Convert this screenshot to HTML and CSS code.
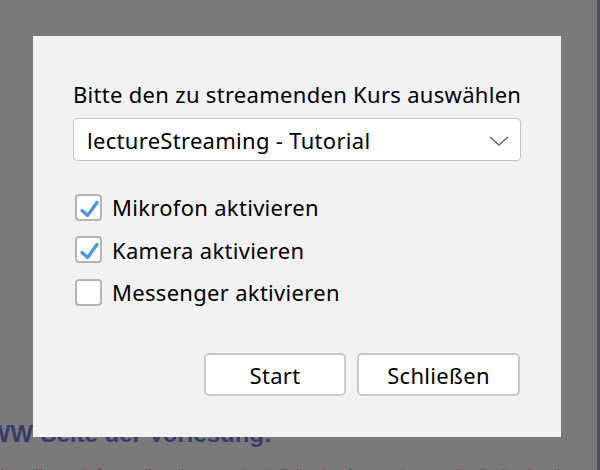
FILE: index.html
```html
<!DOCTYPE html>
<html lang="de">
<head>
<meta charset="utf-8">
<title>Kurs auswählen</title>
<link rel="stylesheet" href="styles.css">
</head>
<body>
<div class="page">
  <h2 class="page-heading">WWW-Seite der Vorlesung:</h2>
  <p class="page-link">http://www.informatik.uni-example.de/lehre/vorlesung/streaming/index.html</p>
</div>
<div class="overlay">
  <div class="dialog">
    <div class="dialog-title">Bitte den zu streamenden Kurs auswählen</div>
    <div class="select">
      <span class="select-value">lectureStreaming - Tutorial</span>
      <svg class="chevron" width="20" height="10" viewBox="0 0 20 10"><path d="M1 1 L10 9 L19 1" fill="none" stroke="#666" stroke-width="1.4"/></svg>
    </div>
    <div class="options">
      <label class="option"><span class="box"><svg width="23" height="23" viewBox="0 0 23 23"><path d="M5 14.5 L10.5 19.5 L20 6.5" fill="none" stroke="#4a94e2" stroke-width="3.2" stroke-linecap="round" stroke-linejoin="round"/></svg></span><span class="option-text">Mikrofon aktivieren</span></label>
      <label class="option"><span class="box"><svg width="23" height="23" viewBox="0 0 23 23"><path d="M5 14.5 L10.5 19.5 L20 6.5" fill="none" stroke="#4a94e2" stroke-width="3.2" stroke-linecap="round" stroke-linejoin="round"/></svg></span><span class="option-text">Kamera aktivieren</span></label>
      <label class="option"><span class="box"></span><span class="option-text">Messenger aktivieren</span></label>
    </div>
    <div class="buttons">
      <button class="btn btn-start">Start</button>
      <button class="btn btn-close">Schließen</button>
    </div>
  </div>
</div>
</body>
</html>
```

FILE: styles.css
```css
html, body {
  margin: 0;
  padding: 0;
  background: #ffffff;
}
.page {
  box-sizing: border-box;
  width: 600px;
  height: 470px;
  overflow: hidden;
  padding-top: 420px;
  border-right: 3px solid #9c9cf0;
  font-family: "Liberation Sans", Arial, sans-serif;
}
.page-heading {
  margin: 0 0 0 -35px;
  font-size: 24px;
  line-height: 28px;
  font-weight: bold;
  color: #7a7ae6;
  white-space: nowrap;
}
.page-link {
  margin: 18px 0 0 0;
  font-size: 17px;
  line-height: 20px;
  color: #e04a86;
  white-space: nowrap;
}
.overlay {
  position: fixed;
  inset: 0;
  background: rgba(0, 0, 0, 0.52);
  padding: 36px 0 0 33px;
  box-sizing: border-box;
}
.dialog {
  box-sizing: border-box;
  width: 528px;
  background: #f2f2f2;
  padding: 42px 40px 41px 40px;
  font-family: "Noto Sans", "Open Sans", sans-serif;
  font-size: 22px;
  letter-spacing: 0.3px;
  color: #000;
}
.dialog-title {
  line-height: 32px;
  white-space: nowrap;
}
.select {
  box-sizing: border-box;
  margin-top: 8px;
  width: 448px;
  height: 43px;
  background: #fff;
  border: 1.5px solid #c4c4c4;
  border-radius: 4px;
  display: flex;
  align-items: center;
  justify-content: space-between;
  padding: 0 11px 0 13px;
}
.select-value {
  white-space: nowrap;
}
.chevron {
  display: block;
  margin-top: 2px;
}
.options {
  margin-top: 33px;
  display: flex;
  flex-direction: column;
  gap: 16.5px;
}
.option {
  display: flex;
  align-items: center;
  height: 26px;
}
.box {
  box-sizing: border-box;
  width: 27px;
  height: 27px;
  margin-left: 2px;
  border: 2px solid #b4b4b4;
  border-radius: 4px;
  background: #fff;
  display: flex;
}
.box svg {
  display: block;
}
.option-text {
  margin-left: 10px;
  white-space: nowrap;
}
.buttons {
  margin-top: 48px;
  display: flex;
  justify-content: flex-end;
  gap: 11px;
  padding-right: 1px;
}
.btn {
  box-sizing: border-box;
  height: 43px;
  background: #fff;
  border: 2px solid #c9c9c9;
  border-radius: 5px;
  font-family: "Noto Sans", "Open Sans", sans-serif;
  font-size: 22px;
  letter-spacing: 0.3px;
  color: #000;
  padding: 0;
}
.btn-start {
  width: 142px;
}
.btn-close {
  width: 163px;
}
```
